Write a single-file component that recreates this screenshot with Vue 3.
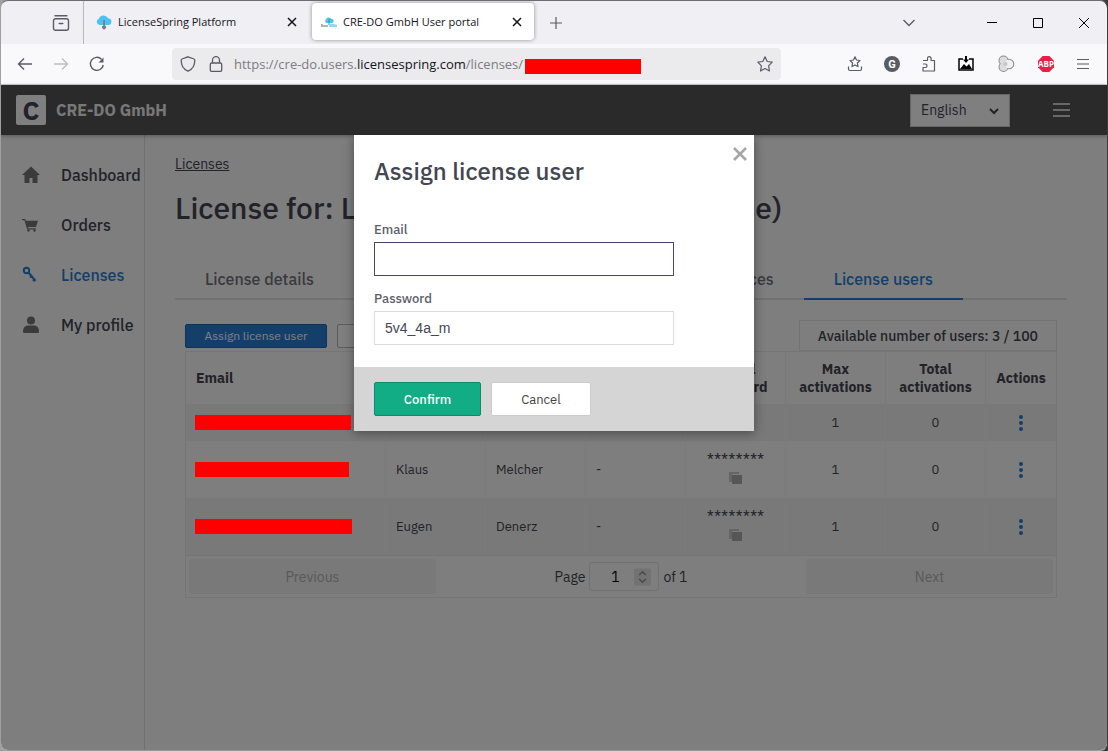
<script setup>
import { ref } from "vue"

const language = ref("English")
const email = ref("")
const password = ref("5v4_4a_m")
const page = ref("1")

const users = [
  { bar: 156, first: "", last: "", company: "", hasPassword: false, max: 1, total: 0 },
  { bar: 154, first: "Klaus", last: "Melcher", company: "-", hasPassword: true, max: 1, total: 0 },
  { bar: 157, first: "Eugen", last: "Denerz", company: "-", hasPassword: true, max: 1, total: 0 },
]
</script>

<template>
  <div class="window">
    <div class="tabstrip">
      <button class="icon-btn recent" aria-label="Recent tabs">
        <svg width="18" height="18" viewBox="0 0 18 18" fill="none" stroke="#5b5b66" stroke-width="1.4" stroke-linecap="round">
          <path d="M3 1.7h12M3.5 4.7h11a2 2 0 0 1 2 2v7.6a2 2 0 0 1-2 2h-11a2 2 0 0 1-2-2V6.7a2 2 0 0 1 2-2zM7.2 9.5h3.6" />
        </svg>
      </button>
      <div class="tab">
        <svg width="16" height="16" viewBox="0 0 16 16">
          <path d="M3.5 11A3.3 3.3 0 0 1 2.8 4.7 5 5 0 0 1 12 4.3 3.4 3.4 0 0 1 12.800 11z" fill="#4cc3ee" />
          <path d="M7.2 6h1.700v5.500a2 2 0 1 1-1.700 0z" fill="#777f88" />
        </svg>
        <span class="tab-title">LicenseSpring Platform</span>
        <button class="icon-btn tab-close" aria-label="Close tab">
          <svg width="10" height="10" viewBox="0 0 10 10" stroke="#15141a" stroke-width="1.5"><path d="M1 1l8 8M9 1l-8 8" /></svg>
        </button>
      </div>
      <div class="tab tab-active">
        <svg width="16" height="16" viewBox="0 0 16 16">
          <path d="M5.5 9A2 2 0 0 1 5 5.5 3 3 0 0 1 10.500 5 2 2 0 0 1 11 9z" fill="#4cc3ee" />
          <path d="M7.5 5h1v6h-1z" fill="#3596bf" />
          <path d="M0 10h2v1h5v2H0z" fill="#b3b3b3" />
          <path d="M8 10h5l3 1v2H8z" fill="#8fd8f3" />
        </svg>
        <span class="tab-title">CRE-DO GmbH User portal</span>
        <button class="icon-btn tab-close" aria-label="Close tab">
          <svg width="10" height="10" viewBox="0 0 10 10" stroke="#15141a" stroke-width="1.5"><path d="M1 1l8 8M9 1l-8 8" /></svg>
        </button>
      </div>
      <button class="icon-btn new-tab" aria-label="New tab">
        <svg width="12" height="12" viewBox="0 0 12 12" stroke="#5b5b66" stroke-width="1.2"><path d="M6 0v12M0 6h12" /></svg>
      </button>
      <div class="window-controls">
        <button class="icon-btn all-tabs" aria-label="List all tabs">
          <svg width="12" height="8" viewBox="0 0 12 8" fill="none" stroke="#5b5b66" stroke-width="1.3"><path d="M.5 1L6 6.500 11.500 1" /></svg>
        </button>
        <button class="icon-btn control" aria-label="Minimize">
          <svg width="10" height="10" viewBox="0 0 10 10" stroke="#000"><path d="M0 4.5h10" /></svg>
        </button>
        <button class="icon-btn control" aria-label="Maximize">
          <svg width="10" height="10" viewBox="0 0 10 10" fill="none" stroke="#000"><path d="M.5.5h9v9h-9z" /></svg>
        </button>
        <button class="icon-btn control" aria-label="Close">
          <svg width="10" height="10" viewBox="0 0 10 10" stroke="#000"><path d="M0 0l10 10M10 0L0 10" /></svg>
        </button>
      </div>
    </div>

    <div class="toolbar">
      <button class="icon-btn tool" aria-label="Back">
        <svg width="16" height="16" viewBox="0 0 16 16" fill="none" stroke="#5b5b66" stroke-width="1.4"><path d="M15 8H1.5M7 2.5L1.5 8 7 13.5" /></svg>
      </button>
      <button class="icon-btn tool" aria-label="Forward">
        <svg width="16" height="16" viewBox="0 0 16 16" fill="none" stroke="#bdbdc2" stroke-width="1.4"><path d="M1 8h13.5M9 2.5L14.5 8 9 13.5" /></svg>
      </button>
      <button class="icon-btn tool" aria-label="Reload">
        <svg width="16" height="16" viewBox="0 0 16 16" fill="none" stroke="#5b5b66" stroke-width="1.4">
          <path d="M12.5 3.2A6.5 6.5 0 1 0 14.3 9" />
          <path d="M14.5 1.5v5h-5z" fill="#5b5b66" stroke="none" />
        </svg>
      </button>
      <div class="urlbar">
        <svg class="url-icon" width="16" height="16" viewBox="0 0 16 16" fill="none" stroke="#5b5b66" stroke-width="1.3"><path d="M8 .8l6 2.2c.6.2.8.6.8 1.2C14.8 9.5 12 13.5 8 15.2 4 13.5 1.2 9.5 1.2 4.2c0-.6.2-1 .8-1.2z" /></svg>
        <svg class="url-icon" width="16" height="16" viewBox="0 0 16 16" fill="none" stroke="#5b5b66" stroke-width="1.3"><path d="M3.8 7h8.4a1.5 1.5 0 0 1 1.5 1.5V14a1.5 1.5 0 0 1-1.5 1.5H3.8A1.5 1.5 0 0 1 2.3 14V8.5A1.5 1.5 0 0 1 3.8 7zM4.5 7V4.2a3.5 3.5 0 0 1 7 0V7" /></svg>
        <div class="url">https://cre-do.users.<span class="domain">licensespring.com</span>/licenses/</div>
        <span class="redacted url-redacted"></span>
        <button class="icon-btn bookmark" aria-label="Bookmark this page">
          <svg width="16" height="16" viewBox="0 0 16 16" fill="none" stroke="#5b5b66" stroke-width="1.2" stroke-linejoin="round"><path d="M8 .8l2.2 4.7 5 .7-3.6 3.6.9 5.2L8 12.5 3.500 15l.9-5.2L.8 6.2l5-.7z" /></svg>
        </button>
      </div>
      <div class="extensions">
        <button class="icon-btn" aria-label="Bookmarks">
          <svg width="16" height="16" viewBox="0 0 16 16" fill="none" stroke="#5b5b66" stroke-width="1.2" stroke-linejoin="round"><path d="M8 .8l1.5 3.2 3.4.5-2.500 2.500.6 3.600-3-1.700-3 1.700.6-3.600-2.500-2.500L6.500 4zM1.500 10.500V13a1.500 1.500 0 0 0 1.500 1.500h10a1.500 1.500 0 0 0 1.500-1.500v-2.500" /></svg>
        </button>
        <button class="icon-btn" aria-label="Account">
          <svg width="16" height="16" viewBox="0 0 16 16"><circle cx="8" cy="8" r="8" fill="#5b5b66" /><text x="8" y="12" text-anchor="middle" font-family="Roboto, sans-serif" font-size="11" font-weight="700" fill="#fff">G</text></svg>
        </button>
        <button class="icon-btn" aria-label="Extensions">
          <svg width="16" height="16" viewBox="0 0 16 16" fill="none" stroke="#5b5b66" stroke-width="1.2" stroke-linejoin="round"><path d="M2 4.5h4.500V2.500a1.800 1.800 0 0 1 3.600 0v2h3.400V15H2v-3.500h2.300a1.600 1.600 0 0 0 0-3.500H2" /></svg>
        </button>
        <button class="icon-btn" aria-label="Save image">
          <svg width="16" height="16" viewBox="0 0 16 16"><path d="M5 3H1v11h14V3h-4" fill="none" stroke="#000" stroke-width="1.5" /><path d="M7 0h2v3.500h2L8 7 5 3.500h2zM2 13l4-5 2.500 2.500L11 8l3 5z" /></svg>
        </button>
        <button class="icon-btn wide" aria-label="Containers">
          <svg width="18" height="18" viewBox="0 0 18 18"><g fill="#e2e2e2" stroke="#8c8c8c" stroke-width="2"><circle cx="6.5" cy="5.5" r="4" /><circle cx="6.5" cy="12" r="4" /><circle cx="12" cy="9" r="4.3" /></g><g fill="#dcdcdc"><circle cx="6.5" cy="5.5" r="4" /><circle cx="6.5" cy="12" r="4" /><circle cx="12" cy="9" r="4.3" fill="#f0f0f0" /></g><circle cx="8.500" cy="9" r="2" fill="#c4c4c4" /></svg>
        </button>
        <button class="icon-btn wide" aria-label="Adblock Plus">
          <svg width="16" height="16" viewBox="0 0 16 16"><path d="M4.700 0h6.600L16 4.700v6.600L11.300 16H4.700L0 11.300V4.700z" fill="#ed1e45" /><text x="8" y="11" text-anchor="middle" font-family="Open Sans, sans-serif" font-size="8" font-weight="700" fill="#fff">ABP</text></svg>
        </button>
        <button class="icon-btn wide" aria-label="Menu">
          <svg width="12" height="12" viewBox="0 0 12 12" stroke="#5b5b66" stroke-width="1.2"><path d="M0 1.500h12M0 6h12M0 10.500h12" /></svg>
        </button>
      </div>
    </div>

    <div class="site">
      <header class="header">
        <span class="logo">C</span>
        <span class="company">CRE-DO GmbH</span>
        <div class="language">
          <select v-model="language" aria-label="Language">
            <option>English</option>
          </select>
          <svg width="10" height="7" viewBox="0 0 10 7" fill="none" stroke="#444651" stroke-width="2"><path d="M1 1l4 4 4-4" /></svg>
        </div>
        <button class="icon-btn" aria-label="Navigation">
          <svg width="18" height="16" viewBox="0 0 18 16" stroke="#d0d0d0" stroke-width="2"><path d="M0 2h17M0 8h17M0 14h17" /></svg>
        </button>
      </header>

      <div class="body">
        <nav class="sidebar">
          <a href="#">
            <svg width="18" height="18" viewBox="0 0 18 18"><path d="M9 .5L18 9h-2.500v8h-5v-5h-3v5h-5V9H0z" /></svg>
            Dashboard
          </a>
          <a href="#">
            <svg width="18" height="18" viewBox="0 0 18 18"><path d="M0 3h3.200l.7 1.800H16l-2 6.200H6l.3 1.200h7.500v1.200H5.200L2.400 4.300H0z" /><circle cx="6.500" cy="14.500" r="1.200" /><circle cx="12.500" cy="14.500" r="1.200" /></svg>
            Orders
          </a>
          <a href="#" class="current">
            <svg width="18" height="18" viewBox="0 0 18 18"><g fill="none" stroke="#297fd6" stroke-width="2"><circle cx="4.500" cy="4.500" r="2.700" /><path d="M6.500 6.500L13.500 15M8 11.500l2.500-2M11 15l2.500-2" /></g></svg>
            Licenses
          </a>
          <a href="#">
            <svg width="18" height="18" viewBox="0 0 18 18"><circle cx="9" cy="4.500" r="4" /><path d="M1 15.500C1 11 4 9.500 6 9.500h6c2 0 5 1.500 5 6 0 1-.5 1.500-1.500 1.500h-13C1.500 17 1 16.500 1 15.500z" /></svg>
            My profile
          </a>
        </nav>

        <main class="main">
          <a href="#" class="breadcrumb">Licenses</a>
          <h1 class="title"><span>License for: L1</span><span>(Floating license)</span></h1>
          <div class="tabs">
            <button>License details</button>
            <button class="devices">Devices</button>
            <button class="selected">License users</button>
          </div>

          <div class="panel">
            <div class="panel-top">
              <button class="primary">Assign license user</button>
              <button class="secondary">Set users limit</button>
              <div class="available">Available number of users: 3 / 100</div>
            </div>
            <table class="users">
              <colgroup>
                <col class="col-email">
                <col v-for="n in 6" :key="n" class="col">
                <col>
              </colgroup>
              <thead>
                <tr>
                  <th class="left">Email</th>
                  <th class="left">First name</th>
                  <th class="left">Last name</th>
                  <th class="left">Company</th>
                  <th>Initial password</th>
                  <th>Max activations</th>
                  <th>Total activations</th>
                  <th>Actions</th>
                </tr>
              </thead>
              <tbody>
                <tr v-for="(user, i) in users" :key="i">
                  <td class="email-cell"><span class="redacted" :style="{ width: user.bar + 'px' }"></span></td>
                  <td>{{ user.first }}</td>
                  <td>{{ user.last }}</td>
                  <td>{{ user.company }}</td>
                  <td class="center">
                    <div v-if="user.hasPassword" class="secret">
                      <span>********</span>
                      <button class="icon-btn" aria-label="Copy password">
                        <svg width="14" height="14" viewBox="0 0 14 14"><path d="M0 1h10v2H3v8H0z" fill="#cacaca" /><path d="M3 4h10v9H3z" fill="#adadad" /></svg>
                      </button>
                    </div>
                  </td>
                  <td class="center">{{ user.max }}</td>
                  <td class="center">{{ user.total }}</td>
                  <td class="center">
                    <button class="icon-btn more" aria-label="Actions">
                      <svg width="4" height="16" viewBox="0 0 4 16" fill="#297fd6"><circle cx="2" cy="2" r="2" /><circle cx="2" cy="8" r="2" /><circle cx="2" cy="14" r="2" /></svg>
                    </button>
                  </td>
                </tr>
              </tbody>
            </table>
            <div class="pagination">
              <button class="page-btn" disabled>Previous</button>
              <div class="page-info">
                <label for="page">Page</label>
                <span class="page-box">
                  <input id="page" v-model="page" type="text">
                  <svg width="18" height="18" viewBox="0 0 18 18" fill="none" stroke="#8f8f9d" stroke-width="1.5"><path d="M0 0h18v18H0z" fill="#e4e4e8" stroke="none" /><path d="M5.500 7L9 3.500 12.500 7M5.500 11L9 14.500 12.500 11" /></svg>
                </span>
                <span>of 1</span>
              </div>
              <button class="page-btn" disabled>Next</button>
            </div>
          </div>
        </main>
      </div>

      <div class="overlay">
        <form class="modal" role="dialog" aria-labelledby="modal-title" @submit.prevent>
          <button type="button" class="icon-btn modal-close" aria-label="Close dialog">
            <svg width="14" height="14" viewBox="0 0 14 14" stroke="#a6a6a6" stroke-width="2.5"><path d="M1 1l12 12M13 1L1 13" /></svg>
          </button>
          <div class="modal-body">
            <h2 id="modal-title">Assign license user</h2>
            <label for="email">Email</label>
            <input id="email" v-model="email" class="focused" type="text">
            <label for="password">Password</label>
            <input id="password" v-model="password" type="text">
          </div>
          <div class="modal-footer">
            <button class="confirm">Confirm</button>
            <button type="button" class="cancel">Cancel</button>
          </div>
        </form>
      </div>
    </div>
  </div>
</template>

<style>
body {
  margin: 0;
  background: linear-gradient(90deg, #a0a0a0 50%, #3c3c3c 50%);
}
</style>

<style scoped>
* {
  box-sizing: border-box;
}

.window {
  min-height: 100vh;
  display: flex;
  flex-direction: column;
  overflow: hidden;
  border: 1px solid;
  border-color: #6e6c70 #3c3c3c #999 #a0a0a0;
  border-radius: 8px;
  background: #f0eff4;
  font-family: "Open Sans", "Noto Sans", sans-serif;
  font-size: 11px;
  color: #15141a;
}

button {
  font-family: inherit;
  cursor: pointer;
}

.icon-btn {
  display: flex;
  align-items: center;
  justify-content: center;
  padding: 0;
  border: none;
  background: none;
}

.tabstrip {
  height: 43px;
  display: flex;
  align-items: stretch;
}

.recent {
  width: 83px;
  padding-left: 38px;
  border-right: 1px solid #b8b7bd;
}

.tab {
  width: 222px;
  margin: 2px 0 4px 3px;
  padding: 0 8px 0 9px;
  display: flex;
  align-items: center;
  gap: 6px;
  border-radius: 4px;
}

.tab-active {
  background: #fff;
  box-shadow: 0 0 4px rgba(0, 0, 0, 0.4);
}

.tab-title {
  flex: 1;
  white-space: nowrap;
}

.tab-close {
  width: 18px;
}

.new-tab {
  width: 36px;
  margin-left: 4px;
}

.window-controls {
  margin-left: auto;
  display: flex;
}

.all-tabs {
  width: 36px;
  margin-right: 42px;
}

.control {
  width: 46px;
}

.toolbar {
  height: 41px;
  display: flex;
  align-items: center;
  padding: 0 18px 0 6px;
  background: #f9f9fb;
  border-bottom: 1px solid #ccccd0;
}

.tool {
  width: 36px;
  height: 32px;
}

.urlbar {
  flex: 1;
  height: 32px;
  margin: 0 66px 0 57px;
  padding: 0 8px;
  display: flex;
  align-items: center;
  border-radius: 4px;
  background: #ebebed;
}

.url-icon {
  margin-right: 12px;
}

.url {
  margin-left: -2px;
  font-size: 13px;
  line-height: 20px;
  white-space: nowrap;
  color: #7b7b82;
}

.domain {
  color: #15141a;
}

.redacted {
  position: relative;
  z-index: 2;
  display: block;
  height: 15px;
  background: #f00;
}

.url-redacted {
  width: 116px;
  margin: 4px 0 0 2px;
}

.bookmark {
  margin-left: auto;
}

.extensions {
  display: flex;
  align-items: center;
  gap: 21px;
}

.wide {
  margin-left: 2px;
}

.site {
  position: relative;
  flex: 1;
  display: flex;
  flex-direction: column;
  font-family: "IBM Plex Sans", Roboto, sans-serif;
  color: #444651;
}

.header {
  position: relative;
  height: 50px;
  display: flex;
  align-items: center;
  padding: 0 36px 0 15px;
  background: #545454;
  box-shadow: 0 1px 4px rgba(0, 0, 0, 0.3);
}

.logo {
  width: 30px;
  height: 30px;
  margin-right: 10px;
  background: #fff;
  border-radius: 2px;
  font-size: 26px;
  line-height: 31px;
  font-weight: 700;
  text-align: center;
}

.company {
  font-size: 16px;
  font-weight: 700;
  color: #f0f0f0;
}

.language {
  position: relative;
  margin: 0 43px 0 auto;
}

.language select {
  width: 100px;
  height: 33px;
  padding: 0 10px;
  appearance: none;
  border: 1px solid #ccc;
  border-radius: 0;
  background: #fff;
  font: 14px "IBM Plex Sans", Roboto, sans-serif;
  color: #444651;
}

.language svg {
  position: absolute;
  right: 11px;
  top: 14px;
  pointer-events: none;
}

.body {
  flex: 1;
  display: flex;
  background: #fcfcfc;
}

.sidebar {
  width: 144px;
  padding-top: 15px;
  border-right: 1px solid #e0e0e0;
}

.sidebar a {
  height: 50px;
  padding-left: 21px;
  display: flex;
  align-items: center;
  gap: 21px;
  font-size: 16px;
  font-weight: 500;
  white-space: nowrap;
  text-decoration: none;
  color: #444651;
}

.sidebar svg {
  fill: #777;
}

.sidebar .current {
  color: #297fd6;
}

.main {
  flex: 1;
  padding: 20px 40px 0 30px;
}

.breadcrumb {
  display: block;
  width: fit-content;
  font-size: 14px;
  line-height: 18px;
  color: #444651;
}

.title {
  max-width: 607px;
  margin: 15px 0 30px;
  display: flex;
  justify-content: space-between;
  font-size: 30px;
  line-height: 40px;
  font-weight: 500;
  white-space: nowrap;
}

.tabs {
  display: flex;
  padding-right: 104px;
  border-bottom: 2px solid #e3e3e3;
}

.tabs button {
  height: 42px;
  margin-bottom: -2px;
  padding: 2px 30px 0;
  border: none;
  border-bottom: 2px solid transparent;
  background: none;
  font-size: 16px;
  font-weight: 500;
  white-space: nowrap;
  color: #75757d;
}

.tabs .devices {
  margin-left: auto;
}

.tabs .selected {
  border-color: #297fd6;
  color: #297fd6;
}

.panel {
  padding: 20px 10px 0;
}

.panel-top {
  display: flex;
  align-items: center;
  gap: 10px;
}

.primary,
.secondary {
  width: 142px;
  height: 24px;
  padding: 0;
  border: 1px solid #1f65ab;
  border-radius: 2px;
  background: #297fd6;
  font-size: 12px;
  color: #fff;
}

.secondary {
  border-color: #bbb;
  background: #fff;
  color: #444651;
}

.available {
  height: 31px;
  margin-left: auto;
  padding: 0 18px;
  border: 1px solid #e6e6e6;
  font-size: 14px;
  line-height: 31px;
  font-weight: 500;
}

.users {
  width: 100%;
  table-layout: fixed;
  border-collapse: separate;
  border-spacing: 0;
  border: 1px solid #eaeaea;
  font-size: 13px;
  line-height: 18px;
}

.col-email {
  width: 200px;
}

.col {
  width: 100px;
}

th {
  height: 52px;
  padding: 0 5px;
  border-right: 1px solid #f0f0f0;
  font-size: 14px;
  font-weight: 700;
}

th.left {
  padding-left: 10px;
  text-align: left;
}

td {
  height: 37px;
  padding: 6px 10px;
  border-right: 1px solid #f6f6f6;
}

th:last-child,
td:last-child {
  border-right: none;
}

tbody tr:nth-child(odd) {
  background: #f3f3f3;
}

.email-cell {
  padding-left: 9px;
}

.center {
  text-align: center;
}

.secret {
  display: flex;
  flex-direction: column;
  align-items: center;
  gap: 2px;
  padding: 4px 0 7px;
  font-size: 16px;
}

.more {
  margin: 0 auto;
}

.pagination {
  display: flex;
  align-items: center;
  padding: 3px;
  border: 1px solid #eaeaea;
  border-top: none;
  font-size: 14px;
}

.page-btn {
  flex: 1;
  height: 35px;
  padding: 0;
  border: none;
  border-radius: 3px;
  background: #f2f2f2;
  font-size: 14px;
  color: #b4b4b4;
}

.page-info {
  flex: 1.5;
  display: flex;
  align-items: center;
  justify-content: center;
  gap: 4px;
}

.page-box {
  width: 70px;
  height: 29px;
  padding-right: 7px;
  display: flex;
  align-items: center;
  border: 1px solid #e2e2e2;
  border-radius: 3px;
}

.page-box input {
  width: 44px;
  padding: 0 0 0 6px;
  border: none;
  outline: none;
  background: none;
  font: 14px "IBM Plex Sans", Roboto, sans-serif;
  text-align: center;
  color: #000;
}

.overlay {
  position: absolute;
  inset: 0;
  z-index: 1;
  padding-top: 50px;
  display: flex;
  justify-content: center;
  align-items: flex-start;
  background: rgba(0, 0, 0, 0.5);
}

.modal {
  position: relative;
  width: 400px;
  background: #fff;
  box-shadow: 0 2px 10px rgba(0, 0, 0, 0.4);
  clip-path: inset(0 -20px -20px -20px);
}

.modal-close {
  position: absolute;
  top: 12px;
  right: 7px;
}

.modal-body {
  padding: 20px 80px 22px 20px;
  display: flex;
  flex-direction: column;
}

.modal h2 {
  margin: 0 0 34px;
  font-size: 24px;
  line-height: 32px;
  font-weight: 500;
}

.modal label {
  font-size: 13px;
  line-height: 18px;
  font-weight: 500;
  color: #5c5e6b;
}

.modal input {
  height: 34px;
  margin-top: 3px;
  padding: 0 10px;
  border: 1px solid #ddd;
  outline: none;
  font: 14px "Liberation Sans", Arial, sans-serif;
  color: #444651;
}

.modal .focused {
  margin-bottom: 14px;
  border-color: #44466b;
}

.modal-footer {
  height: 64px;
  padding: 0 20px;
  display: flex;
  align-items: center;
  gap: 10px;
  background: #d5d5d5;
}

.confirm,
.cancel {
  width: 107px;
  height: 34px;
  border: 1px solid #0e8a68;
  border-radius: 2px;
  background: #12ad84;
  font-size: 13px;
  font-weight: 500;
  color: #fff;
}

.cancel {
  width: 100px;
  border-color: #ccc;
  background: #fff;
  font-weight: 400;
  color: #444;
}
</style>
